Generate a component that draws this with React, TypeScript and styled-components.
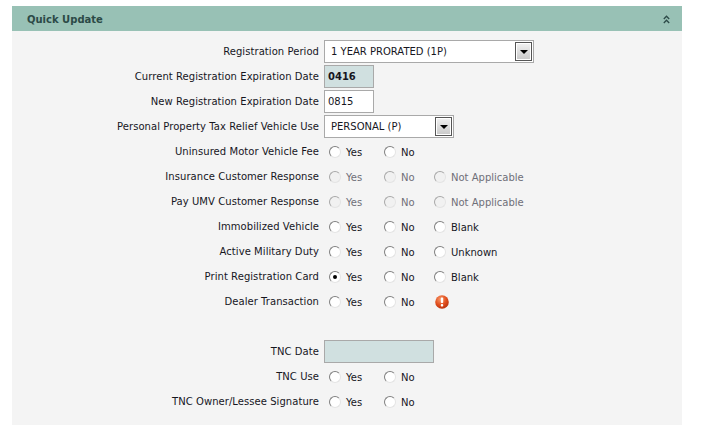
import React from 'react';
import styled, { createGlobalStyle } from 'styled-components';

const GlobalStyle = createGlobalStyle`
    html, body {
        margin: 0;
        background: #fff;
    }
`;

const Panel = styled.section`
    width: 670px;
    margin: 6px 0 0 12px;
    font-family: "DejaVu Sans", Verdana, sans-serif;
    font-size: 10px;
    color: #16161e;
`;

const Header = styled.header`
    height: 25px;
    padding: 1px 12px 0 15px;
    box-sizing: border-box;
    display: flex;
    align-items: center;
    justify-content: space-between;
    background: #98c1b5;
`;

const Title = styled.h2`
    margin: 0;
    font-size: 10px;
    font-weight: bold;
    color: #2c4a47;
`;

const Body = styled.div`
    padding: 8px 0 11px;
    background: #f4f4f4;
`;

const Row = styled.div<{ $gapAfter?: boolean }>`
    height: 25px;
    margin-bottom: ${(p) => (p.$gapAfter ? '25px' : '0')};
    display: grid;
    grid-template-columns: 307px 1fr;
    column-gap: 5px;
    align-items: center;
`;

const Label = styled.label`
    text-align: right;
    white-space: nowrap;
    letter-spacing: 0.06px;
`;

const Options = styled.div`
    display: flex;
    align-items: center;
`;

const Option = styled.label<{ $width: number; $disabled?: boolean }>`
    width: ${(p) => p.$width}px;
    display: flex;
    align-items: center;
    padding-left: 5px;
    box-sizing: border-box;
    gap: 5px;
    color: ${(p) => (p.$disabled ? '#6f6f78' : 'inherit')};
`;

const OptionText = styled.span`
    padding-top: 2px;
`;

const Radio = styled.input.attrs({ type: 'radio' })`
    appearance: none;
    width: 12px;
    height: 12px;
    margin: 0;
    flex: none;
    border-radius: 50%;
    background: #fff;
    border: 1px solid;
    border-color: #7f7f7f #e4e4e4 #e4e4e4 #7f7f7f;
    box-sizing: border-box;
    display: grid;
    place-items: center;

    &:disabled {
        background: #f1f1f1;
        border-color: #a8a8a8 #e4e4e4 #e4e4e4 #a8a8a8;
    }

    &:checked::after {
        content: '';
        width: 4px;
        height: 4px;
        border-radius: 50%;
        background: #000;
    }
`;

const SelectBox = styled.div<{ $width: number }>`
    width: ${(p) => p.$width}px;
    height: 23px;
    box-sizing: border-box;
    display: flex;
    align-items: center;
    justify-content: space-between;
    padding: 1px 1px 1px 6px;
    background: #fff;
    border: 1px solid #a9a9a9;
`;

const SelectArrow = styled.span`
    width: 17px;
    height: 19px;
    box-sizing: border-box;
    display: flex;
    align-items: center;
    justify-content: center;
    border: 1px solid #555;
    outline: 1px solid #fff;
    outline-offset: -2px;
    background: linear-gradient(#f2f2f2, #c8c8c8);

    &::after {
        content: '';
        border-left: 4px solid transparent;
        border-right: 4px solid transparent;
        border-top: 4px solid #000;
    }
`;

const TextBox = styled.input<{ $width: number; $filled?: boolean; $bold?: boolean }>`
    width: ${(p) => p.$width}px;
    height: 23px;
    box-sizing: border-box;
    padding: 0 3px;
    border: 1px solid #a9a9a9;
    outline: none;
    font-family: inherit;
    font-size: 10px;
    color: inherit;
    font-weight: ${(p) => (p.$bold ? 'bold' : 'normal')};
    background: ${(p) => (p.$filled ? '#d0e0e0' : '#fff')};
`;

const Notice = styled.span`
    margin-left: 6px;
    display: flex;
`;

const DoubleChevron = () => (
    <svg width="7" height="9" viewBox="0 0 7 9" fill="none" stroke="#2c4a47" strokeWidth="1.3">
        <path d="M0.8 4 L3.5 1.2 L6.2 4" />
        <path d="M0.8 8 L3.5 5.2 L6.2 8" />
    </svg>
);

const ErrorIcon = () => (
    <svg width="14" height="14" viewBox="0 0 14 14">
        <defs>
            <radialGradient id="err" cx="40%" cy="30%" r="75%">
                <stop offset="0%" stopColor="#f79a6c" />
                <stop offset="55%" stopColor="#e2501f" />
                <stop offset="100%" stopColor="#b5300c" />
            </radialGradient>
        </defs>
        <circle cx="7" cy="7" r="6.8" fill="url(#err)" />
        <rect x="5.8" y="2.6" width="2.4" height="5.4" rx="0.8" fill="#fff" />
        <rect x="5.8" y="9.1" width="2.4" height="2.4" rx="0.8" fill="#fff" />
    </svg>
);

interface RadioRowProps {
    label: string;
    third?: string;
    checked?: string;
    disabled?: boolean;
    gapAfter?: boolean;
    children?: React.ReactNode;
}

const RadioRow: React.FC<RadioRowProps> = (props) => {
    const choices = props.third ? ['Yes', 'No', props.third] : ['Yes', 'No'];
    return (
        <Row $gapAfter={props.gapAfter}>
            <Label>{props.label}</Label>
            <Options>
                {choices.map((choice, i) => (
                    <Option
                        key={choice}
                        $width={i === 0 ? 55 : i === 1 ? 50 : 120}
                        $disabled={props.disabled}>
                        <Radio
                            name={props.label}
                            disabled={props.disabled}
                            defaultChecked={props.checked === choice} />
                        <OptionText>{choice}</OptionText>
                    </Option>
                ))}
                {props.children}
            </Options>
        </Row>
    );
};

const App: React.FC = () => {
    return (
        <Panel>
            <GlobalStyle />
            <Header>
                <Title>Quick Update</Title>
                <DoubleChevron />
            </Header>
            <Body>
                <Row>
                    <Label>Registration Period</Label>
                    <SelectBox $width={210}>
                        1 YEAR PRORATED (1P)
                        <SelectArrow />
                    </SelectBox>
                </Row>
                <Row>
                    <Label>Current Registration Expiration Date</Label>
                    <TextBox $width={50} $filled $bold readOnly value="0416" />
                </Row>
                <Row>
                    <Label>New Registration Expiration Date</Label>
                    <TextBox $width={50} readOnly value="0815" />
                </Row>
                <Row>
                    <Label>Personal Property Tax Relief Vehicle Use</Label>
                    <SelectBox $width={130}>
                        PERSONAL (P)
                        <SelectArrow />
                    </SelectBox>
                </Row>
                <RadioRow label="Uninsured Motor Vehicle Fee" />
                <RadioRow label="Insurance Customer Response" third="Not Applicable" disabled />
                <RadioRow label="Pay UMV Customer Response" third="Not Applicable" disabled />
                <RadioRow label="Immobilized Vehicle" third="Blank" />
                <RadioRow label="Active Military Duty" third="Unknown" />
                <RadioRow label="Print Registration Card" third="Blank" checked="Yes" />
                <RadioRow label="Dealer Transaction" gapAfter>
                    <Notice><ErrorIcon /></Notice>
                </RadioRow>
                <Row>
                    <Label>TNC Date</Label>
                    <TextBox $width={110} $filled readOnly value="" />
                </Row>
                <RadioRow label="TNC Use" />
                <RadioRow label="TNC Owner/Lessee Signature" />
            </Body>
        </Panel>
    );
};

export default App;
